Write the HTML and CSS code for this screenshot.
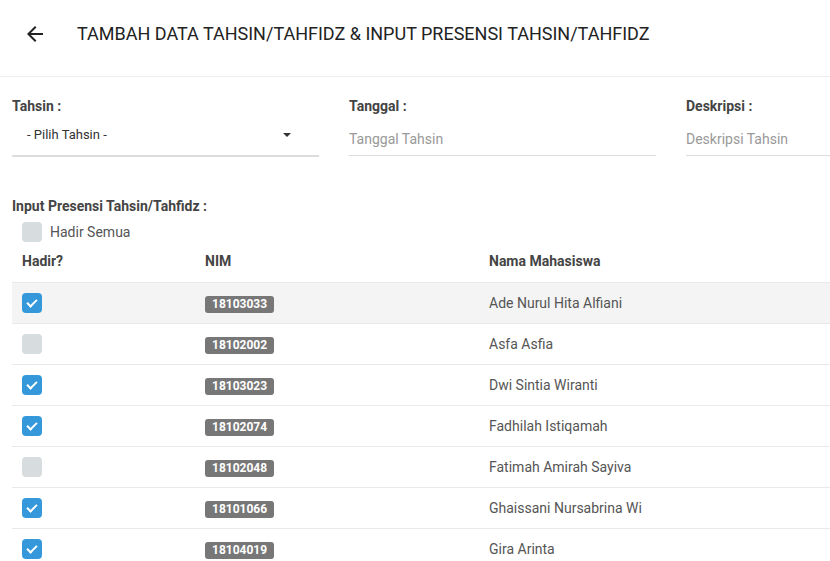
FILE: index.html
```html
<!DOCTYPE html>
<html>
<head>
<meta charset="utf-8">
<link rel="stylesheet" href="styles.css">
</head>
<body>
<header class="topbar">
  <svg class="back" width="24" height="24" viewBox="0 0 24 24"><path d="M20 11H7.83l5.59-5.59L12 4l-8 8 8 8 1.41-1.41L7.83 13H20v-2z" fill="#222"/></svg>
  <h1 class="title">TAMBAH DATA TAHSIN/TAHFIDZ &amp; INPUT PRESENSI TAHSIN/TAHFIDZ</h1>
</header>
<main class="content">
  <div class="form-row">
    <div class="field">
      <label class="label">Tahsin :</label>
      <div class="select"><span>- Pilih Tahsin -</span><span class="caret"></span></div>
    </div>
    <div class="field">
      <label class="label">Tanggal :</label>
      <div class="input">Tanggal Tahsin</div>
    </div>
    <div class="field">
      <label class="label">Deskripsi :</label>
      <div class="input">Deskripsi Tahsin</div>
    </div>
  </div>
  <div class="section-label">Input Presensi Tahsin/Tahfidz :</div>
  <div class="all-row"><span class="cb"></span><span>Hadir Semua</span></div>
  <table class="tbl">
    <thead>
      <tr><th class="c1">Hadir?</th><th class="c2">NIM</th><th>Nama Mahasiswa</th></tr>
    </thead>
    <tbody>
      <tr class="hover"><td><span class="cb on"></span></td><td><span class="badge">18103033</span></td><td>Ade Nurul Hita Alfiani</td></tr>
      <tr><td><span class="cb"></span></td><td><span class="badge">18102002</span></td><td>Asfa Asfia</td></tr>
      <tr><td><span class="cb on"></span></td><td><span class="badge">18103023</span></td><td>Dwi Sintia Wiranti</td></tr>
      <tr><td><span class="cb on"></span></td><td><span class="badge">18102074</span></td><td>Fadhilah Istiqamah</td></tr>
      <tr><td><span class="cb"></span></td><td><span class="badge">18102048</span></td><td>Fatimah Amirah Sayiva</td></tr>
      <tr><td><span class="cb on"></span></td><td><span class="badge">18101066</span></td><td>Ghaissani Nursabrina Wi</td></tr>
      <tr><td><span class="cb on"></span></td><td><span class="badge">18104019</span></td><td>Gira Arinta</td></tr>
    </tbody>
  </table>
</main>
</body>
</html>
```
FILE: styles.css
```css
html, body { margin: 0; padding: 0; }
body {
  font-family: Roboto, "Liberation Sans", sans-serif;
  color: #444;
  background: #fff;
  width: 830px;
  height: 561px;
  overflow: hidden;
}
.topbar {
  height: 77px;
  border-bottom: 1px solid #eceeef;
  display: flex;
  align-items: center;
  padding-left: 23px;
  padding-bottom: 9px;
  box-sizing: border-box;
}
.back { flex: none; }
.title {
  margin: 0 0 0 30px;
  font-size: 18px;
  font-weight: 400;
  color: #222;
  white-space: nowrap;
}
.content { padding: 0 0 0 12px; width: 1010px; }
.form-row {
  display: flex;
  gap: 30px;
  margin-top: 21px;
}
.field { width: 307px; flex: none; }
.label {
  display: block;
  font-size: 14px;
  font-weight: 700;
  color: #444;
  line-height: 16px;
}
.select {
  height: 43px;
  border-bottom: 2px solid #ddd;
  display: flex;
  align-items: center;
  justify-content: space-between;
  padding: 0 28px 0 15px;
  font-size: 13px;
  color: #333;
  box-sizing: border-box;
}
.caret {
  width: 0; height: 0;
  border-left: 4px solid transparent;
  border-right: 4px solid transparent;
  border-top: 4px solid #333;
}
.input {
  margin-top: 9px;
  height: 33px;
  border-bottom: 1px solid #ddd;
  display: flex;
  align-items: center;
  font-size: 14px;
  color: #999;
  box-sizing: border-box;
}
.section-label {
  margin-top: 41px;
  font-size: 14px;
  font-weight: 700;
  color: #444;
  line-height: 16px;
}
.all-row {
  display: flex;
  align-items: center;
  gap: 8px;
  margin: 8px 0 0 10px;
  font-size: 14px;
  color: #555;
  height: 20px;
}
.cb {
  display: inline-block;
  width: 20px;
  height: 20px;
  border-radius: 4px;
  background: #d7dcdf;
  position: relative;
  vertical-align: middle;
}
.cb.on { background: #3498db; }
.cb.on::after {
  content: "";
  position: absolute;
  left: 7px;
  top: 4px;
  width: 4px;
  height: 8px;
  border: solid #fff;
  border-width: 0 2px 2px 0;
  transform: rotate(45deg);
}
.tbl {
  width: 1000px;
  border-collapse: collapse;
  font-size: 14px;
}
.tbl th {
  text-align: left;
  font-size: 14px;
  font-weight: 700;
  color: #444;
  padding: 11px 10px 13px;
  line-height: 16px;
}
.tbl th.c1 { width: 163px; }
.tbl th.c2 { width: 264px; }
.tbl td {
  padding: 0 10px;
  height: 40px;
  border-top: 1px solid #e9e9e9;
  color: #555;
  vertical-align: middle;
}
.tbl tr.hover td { background: #f4f4f4; }
.badge {
  display: inline-block;
  background: #777;
  color: #fff;
  font-size: 12px;
  font-weight: 700;
  line-height: 17px;
  padding: 0 7px;
  border-radius: 3px;
  position: relative;
  top: 1px;
}
```
